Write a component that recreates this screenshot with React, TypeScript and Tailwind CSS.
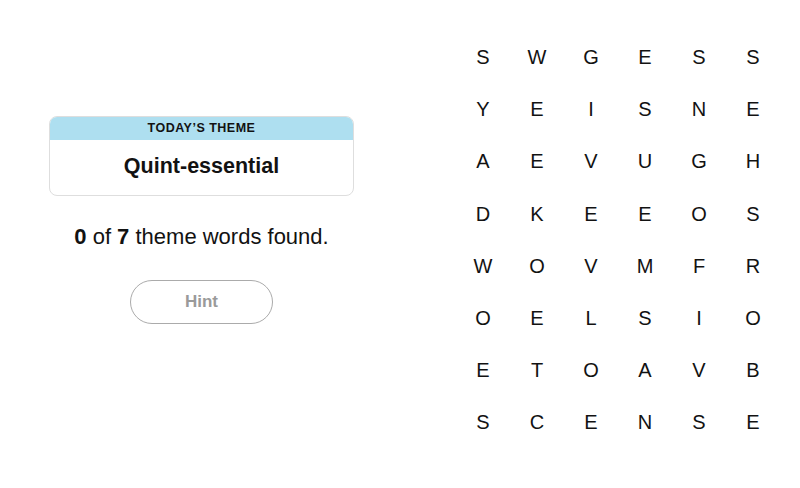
const letters = [
  "SWGESS",
  "YEISNE",
  "AEVUGH",
  "DKEEOS",
  "WOVMFR",
  "OELSIO",
  "ETOAVB",
  "SCENSE",
];

const App = () => {
  return (
    <div
      className="flex h-[488px] w-[800px] bg-white text-[#121212]"
      style={{ fontFamily: '"Liberation Sans", Arial, sans-serif' }}
    >
      <div className="ml-[49px] mt-[116px] flex w-[305px] flex-col items-center">
        <div className="w-full overflow-hidden rounded-lg border border-[#dedede]">
          <div className="flex h-[23px] items-center justify-center bg-[#aedff0] text-[12.5px] font-bold tracking-[0.5px]">
            TODAY’S THEME
          </div>
          <div className="flex h-[55px] items-center justify-center pb-[2px] text-[21.5px] font-bold">
            Quint-essential
          </div>
        </div>
        <p className="mt-[28px] text-[22px] leading-[26px]">
          <b>0</b> of <b>7</b> theme words found.
        </p>
        <button className="mt-[30px] h-[44px] w-[143px] rounded-full border-[1.5px] border-[#ababab] text-[17px] font-bold text-[#9a9a9a]">
          Hint
        </button>
      </div>

      <div className="ml-[102px] mt-[31px] grid grid-cols-[repeat(6,54px)] grid-rows-[repeat(8,52.2px)]">
        {letters.flatMap((row, r) =>
          row.split("").map((ch, c) => (
            <div key={`${r}-${c}`} className="flex items-center justify-center text-[20px]">
              {ch}
            </div>
          ))
        )}
      </div>
    </div>
  );
};

export default App;
